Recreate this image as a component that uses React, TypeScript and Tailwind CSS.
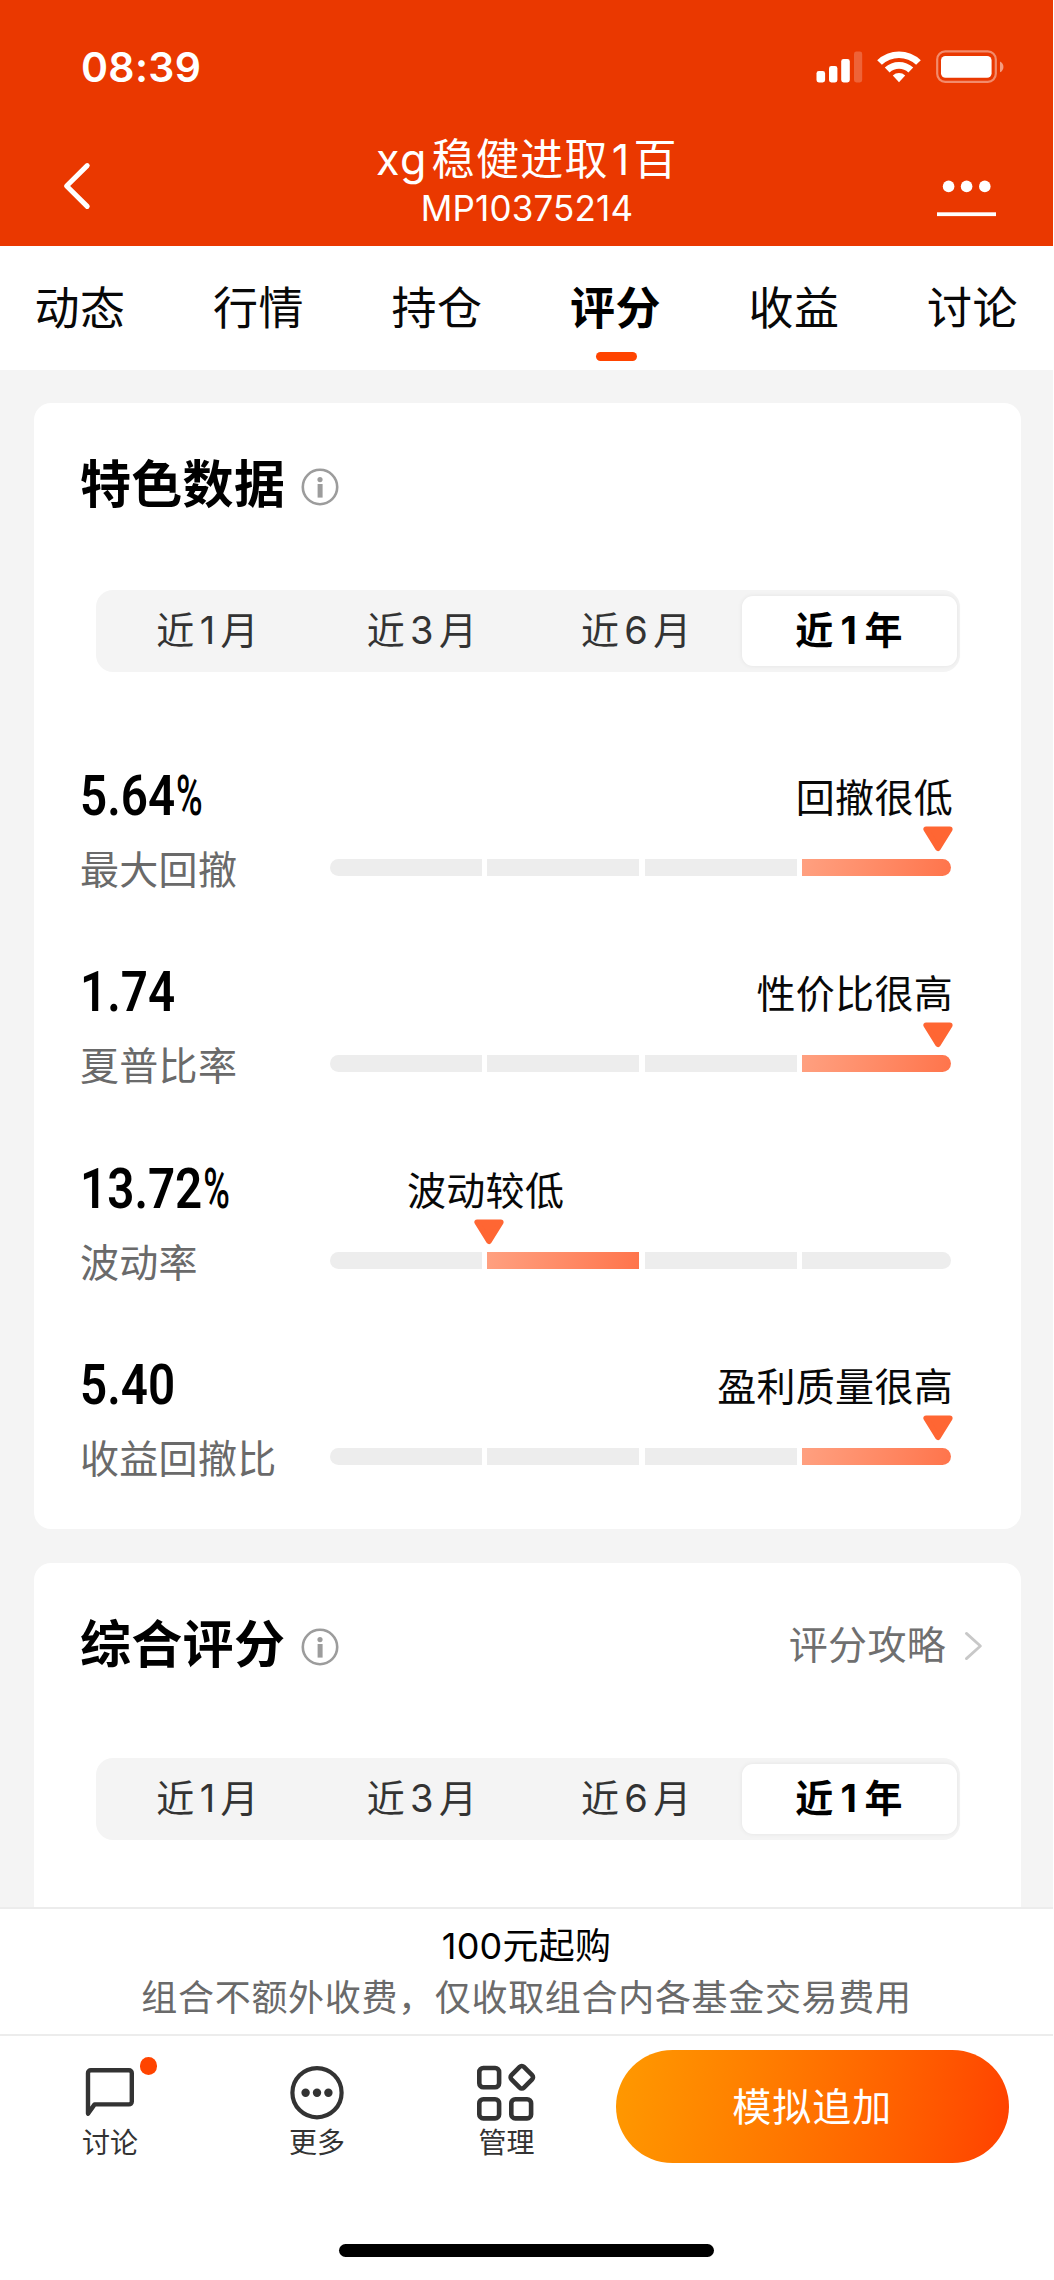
import React from "react";

const periods = [
  { n: "1", unit: "月" },
  { n: "3", unit: "月" },
  { n: "6", unit: "月" },
  { n: "1", unit: "年", active: true },
];
const tabs = ["动态", "行情", "持仓", "评分", "收益", "讨论"];

type Metric = {
  value: string;
  percent?: boolean;
  name: string;
  verdict: string;
  level: number;
  atEnd: boolean;
};

const metrics: Metric[] = [
  { value: "5.64", percent: true, name: "最大回撤", verdict: "回撤很低", level: 3, atEnd: true },
  { value: "1.74", name: "夏普比率", verdict: "性价比很高", level: 3, atEnd: true },
  { value: "13.72", percent: true, name: "波动率", verdict: "波动较低", level: 1, atEnd: false },
  { value: "5.40", name: "收益回撤比", verdict: "盈利质量很高", level: 3, atEnd: true },
];

function StatusBar() {
  return (
    <div className="flex h-[134px] items-start justify-between pl-[81px] pr-[48.5px] pt-[43px]">
      <span className="text-[41px] font-semibold leading-[48px] tracking-[0.3px]">08:39</span>
      <svg className="mt-[5px]" width="190" height="38" viewBox="815 48 190 38" fill="#fff">
        <rect x="816.5" y="71" width="8.6" height="11.5" rx="2.4" />
        <rect x="829" y="66" width="8.4" height="16.5" rx="2.4" />
        <rect x="841.2" y="59" width="8.6" height="23.5" rx="2.4" />
        <rect x="854" y="51.5" width="8.2" height="31" rx="2.4" opacity="0.22" />
        <path d="M877.2 60.2a31.5 31.5 0 0 1 43.6 0l-4.7 4.6a25 25 0 0 0-34.2 0z" />
        <path d="M884.8 67.6a20.6 20.6 0 0 1 28.4 0l-4.8 4.8a13.8 13.8 0 0 0-18.8 0z" />
        <path d="M892.8 75.4a9.3 9.3 0 0 1 12.4 0l-6.2 6.8z" />
        <rect x="937.2" y="51.4" width="58.6" height="30.4" rx="8" fill="none" stroke="#fff" strokeWidth="2.2" opacity="0.42" />
        <rect x="941" y="56" width="50.6" height="21.8" rx="4.5" />
        <path d="M1000 61.5c4.6 1.8 4.6 9 0 10.8z" opacity="0.5" />
      </svg>
    </div>
  );
}

function Header() {
  return (
    <header className="h-[246px] bg-[#ea3800] text-white">
      <StatusBar />
      <div className="flex h-[112px] items-start justify-between pl-[63px] pr-[56px]">
        <svg className="mt-[28px]" width="30" height="48" viewBox="0 0 30 48" fill="none" stroke="#fff" strokeWidth="5" strokeLinecap="round" strokeLinejoin="round">
          <path d="M24.2 3.6 3.6 24 24.2 44.4" />
        </svg>
        <div className="flex flex-col items-center pl-[24px]">
          <h1 className="text-[43px] leading-[50px] tracking-[1.3px]">
            <span className="mr-[4px]">xg</span>稳健进取<span className="mx-[3px]">1</span>百
          </h1>
          <p className="pt-px text-[35px] leading-[47px] tracking-[0.15px]">MP10375214</p>
        </div>
        <svg className="mt-[46px]" width="60" height="38" viewBox="937 180 60 38" fill="#fff">
          <circle cx="948.6" cy="186.4" r="5.8" />
          <circle cx="966.6" cy="186.4" r="5.8" />
          <circle cx="984.8" cy="186.4" r="5.8" />
          <rect x="937" y="212.3" width="59" height="3.8" />
        </svg>
      </div>
    </header>
  );
}

function TabBar() {
  return (
    <nav className="flex h-[124px] justify-between bg-white pl-[34px] pr-[34.5px] text-[#080808]">
      {tabs.map((t) => (
        <div key={t} className="flex w-[92px] flex-col items-center pt-[35px]">
          <span className={`whitespace-nowrap text-[45px] leading-[56px] tracking-[0.6px] ${t === "评分" ? "font-bold text-black" : ""}`}>{t}</span>
          {t === "评分" && <span className="ml-[2px] mt-[15px] h-[9px] w-[41px] rounded-full bg-[#ff4400]" />}
        </div>
      ))}
    </nav>
  );
}

function InfoIcon() {
  return (
    <svg className="ml-[15.5px] mt-[5px]" width="38" height="38" viewBox="0 0 38 38">
      <circle cx="19" cy="19" r="17.2" fill="none" stroke="#9c9c9c" strokeWidth="2.6" />
      <circle cx="19" cy="11.6" r="2.6" fill="#9c9c9c" />
      <rect x="16.6" y="16" width="5" height="13.6" fill="#9c9c9c" />
    </svg>
  );
}

function CardTitle({ children }: { children: React.ReactNode }) {
  return (
    <div className="flex items-center">
      <h2 className="pt-[2px] text-[51px] font-bold leading-[58px] tracking-[0.3px] text-black">{children}</h2>
      <InfoIcon />
    </div>
  );
}

function Segmented() {
  return (
    <div className="ml-[62px] flex h-[82px] w-[864px] rounded-[17px] bg-[#f4f4f4] px-[3px] py-[6px]">
      {periods.map((p) => (
        <div
          key={p.n + p.unit}
          className={`flex items-center justify-center rounded-[11px] pb-[2px] text-[38px] leading-[50px] tracking-[1.4px] ${
            p.active ? "w-[215px] bg-white font-bold text-black shadow-[0_0_5px_rgba(0,0,0,0.07)]" : "flex-1 pl-[4px] text-[#333]"
          }`}
        >
          近<span className={p.active ? "mx-[6px]" : "mx-[4px]"}>{p.n}</span>
          {p.unit}
        </div>
      ))}
    </div>
  );
}

function Bar({ level }: { level: number }) {
  return (
    <div className="flex h-[17px] w-[620.5px] gap-[5.3px] overflow-hidden rounded-full">
      {[0, 1, 2, 3].map((i) => (
        <div
          key={i}
          className={`${i === 3 ? "flex-1" : "w-[152px]"} ${i === level ? "bg-linear-100 from-[#ffa080] to-[#ff744b]" : "bg-[#ededed]"}`}
        />
      ))}
    </div>
  );
}

function MetricRow({ m }: { m: Metric }) {
  return (
    <div className="flex h-[196.5px] pl-[46px] pr-[66px]">
      <div className="w-[250px] shrink-0">
        <div className="flex h-[62px] pt-[2px] text-[56px] leading-[60px] text-black [font-family:Roboto,sans-serif]">
          <span className="flex origin-left scale-x-[0.85]">
            <span className="font-semibold">{m.value}</span>
            {m.percent && <span className="ml-px inline-block origin-left scale-x-[0.76] font-medium">%</span>}
          </span>
        </div>
        <div className="mt-[19px] whitespace-nowrap text-[39px] leading-[50px] tracking-[0.3px] text-[#6a6a6a]">{m.name}</div>
      </div>
      <div className={`flex w-[624px] flex-col ${m.atEnd ? "items-end" : "items-start"}`}>
        <div className={`whitespace-nowrap pt-[9px] text-[39px] leading-[50px] tracking-[0.3px] text-[#080808] ${m.atEnd ? "mr-px" : "ml-[77px]"}`}>
          {m.verdict}
        </div>
        <svg className={`mt-[3px] ${m.atEnd ? "mr-px" : "ml-[144px]"}`} width="30" height="26" viewBox="0 0 30 26">
          <path d="M3.2 3.2H26.8L15 22.2Z" fill="#ff6633" stroke="#ff6633" strokeWidth="5.6" strokeLinejoin="round" />
        </svg>
        <div className="mt-[7px] self-start">
          <Bar level={m.level} />
        </div>
      </div>
    </div>
  );
}

function NavItem({ label, children, className }: { label: string; children: React.ReactNode; className: string }) {
  return (
    <div className={`relative flex w-[60px] flex-col items-center ${className}`}>
      {children}
      <span className="mt-[4px] whitespace-nowrap text-[28px] leading-[34px] text-[#333]">{label}</span>
    </div>
  );
}

function BottomBar() {
  return (
    <footer className="bg-white">
      <div className="flex h-[127px] flex-col items-center border-t-2 border-[#ececec] pt-[13px]">
        <p className="text-[36px] leading-[48px] tracking-[0.2px] text-black">100元起购</p>
        <p className="mt-[3px] text-[36px] leading-[50px] tracking-[0.68px] text-[#6a6a6a]">组合不额外收费，仅收取组合内各基金交易费用</p>
      </div>
      <div className="flex h-[210px] items-start border-t-2 border-[#ececec] pt-[14px]">
        <NavItem label="讨论" className="ml-[80px] mt-[12px]">
          <svg width="60" height="60" viewBox="80 2062 60 60" fill="none" stroke="#333" strokeWidth="4.4" strokeLinejoin="round">
            <path d="M88 2113.6V2073a2.8 2.8 0 0 1 2.8-2.8H129a2.8 2.8 0 0 1 2.8 2.8v28.6a2.8 2.8 0 0 1-2.8 2.8H94.6Z" />
          </svg>
          <span className="absolute -top-[5px] left-[59.6px] size-[17.6px] rounded-full bg-[#ff4400]" />
        </NavItem>
        <NavItem label="更多" className="ml-[147px] mt-[12px]">
          <svg width="60" height="60" viewBox="0 0 60 60" fill="#333">
            <circle cx="30" cy="30.7" r="24.6" fill="none" stroke="#333" strokeWidth="4.2" />
            <circle cx="18.6" cy="30.7" r="4.2" />
            <circle cx="30" cy="30.7" r="4.2" />
            <circle cx="41.4" cy="30.7" r="4.2" />
          </svg>
        </NavItem>
        <NavItem label="管理" className="ml-[129.5px] mt-[12px]">
          <svg width="60" height="60" viewBox="477 2062 60 60" fill="none" stroke="#333" strokeWidth="4.6">
            <rect x="479.3" y="2068" width="19.8" height="19.2" rx="4" />
            <rect x="479.3" y="2099.2" width="19.8" height="19.2" rx="4" />
            <rect x="511.3" y="2099.2" width="19.8" height="19.2" rx="4" />
            <rect x="513" y="2068.4" width="17.6" height="17.6" rx="3" transform="rotate(45 521.8 2077.2)" />
          </svg>
        </NavItem>
        <button className="ml-[79px] flex h-[113px] w-[393.5px] items-center justify-center rounded-full bg-linear-100 from-[#ff9900] to-[#ff4000] text-[39px] leading-[50px] tracking-[1px] text-white">
          模拟追加
        </button>
      </div>
      <div className="ml-[339px] h-[13px] w-[375px] rounded-full bg-black" />
    </footer>
  );
}

export default function App() {
  return (
    <div className="h-[2280px] w-[1054px] overflow-hidden bg-white pr-px [font-family:Inter,'Noto_Sans_CJK_SC',sans-serif]">
      <Header />
      <TabBar />
      <main className="h-[1537px] overflow-hidden bg-[#f4f4f4] pl-[34px] pr-[32px] pt-[33px]">
        <section className="h-[1126px] rounded-[17px] bg-white pt-[51px]">
          <div className="pl-[46px]">
            <CardTitle>特色数据</CardTitle>
          </div>
          <div className="pt-[76px]">
            <Segmented />
          </div>
          <div className="pt-[91.6px]">
            {metrics.map((m) => (
              <MetricRow key={m.name} m={m} />
            ))}
          </div>
        </section>
        <section className="mt-[34px] h-[360px] rounded-t-[17px] bg-white pt-[51px]">
          <div className="flex items-center justify-between pl-[46px] pr-[38px]">
            <CardTitle>综合评分</CardTitle>
            <div className="flex items-center pt-px text-[39px] leading-[50px] tracking-[0.3px] text-[#6f6f6f]">
              评分攻略
              <svg className="ml-[18px] mt-[2px]" width="19" height="30" viewBox="0 0 19 30" fill="none" stroke="#c8c8c8" strokeWidth="2.8" strokeLinecap="round" strokeLinejoin="round">
                <path d="M2.4 2.4 16.4 15 2.4 27.6" />
              </svg>
            </div>
          </div>
          <div className="pt-[84px]">
            <Segmented />
          </div>
        </section>
      </main>
      <BottomBar />
    </div>
  );
}
